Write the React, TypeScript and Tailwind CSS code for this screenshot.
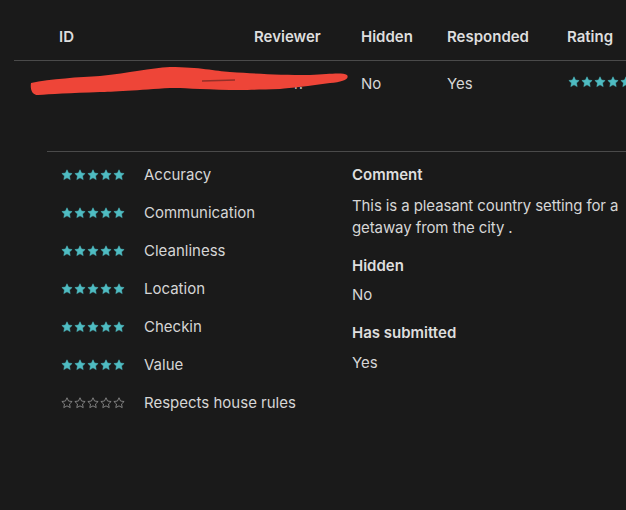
import React from "react";

const Star = ({ filled }: { filled: boolean }) => (
  <svg width="12" height="12" viewBox="0 0 24 24" className="shrink-0">
    <path
      d="M12 1.5l3.1 6.6 7.2.9-5.3 5 1.4 7.2L12 17.7l-6.4 3.5 1.4-7.2-5.3-5 7.2-.9z"
      fill={filled ? "#4fbcc2" : "none"}
      stroke={filled ? "#4fbcc2" : "#8a8a8a"}
      strokeWidth={filled ? 1 : 1.8}
      strokeLinejoin="round"
    />
  </svg>
);

const Stars = ({ filled, count = 5 }: { filled: boolean; count?: number }) => (
  <div className="flex items-center gap-[1px]">
    {Array.from({ length: count }).map((_, i) => (
      <Star key={i} filled={filled} />
    ))}
  </div>
);

const ratings: [string, boolean][] = [
  ["Accuracy", true],
  ["Communication", true],
  ["Cleanliness", true],
  ["Location", true],
  ["Checkin", true],
  ["Value", true],
  ["Respects house rules", false],
];

export default function App() {
  return (
    <div
      className="w-[626px] h-[510px] overflow-hidden bg-[#1a1a1a] text-[15px] text-[#d6d6d6]"
      style={{ fontFamily: "Inter, 'Noto Sans', sans-serif" }}
    >
      {/* header */}
      <div className="ml-[14px] flex h-[61px] items-start border-b border-[#4a4a4a] pt-[26px] font-semibold leading-[22px] text-[#dedede]">
        <div className="w-[240px] pl-[45px]">ID</div>
        <div className="w-[107px]">Reviewer</div>
        <div className="w-[86px]">Hidden</div>
        <div className="w-[120px]">Responded</div>
        <div className="flex-1 whitespace-nowrap">Rating</div>
      </div>

      {/* data row */}
      <div className="relative ml-[14px] flex h-[46px] items-center">
        <div className="w-[240px] pl-[60px] text-[#bdbdbd]">T</div>
        <div className="w-[107px] pl-[40px] text-[#bdbdbd]">r.</div>
        <div className="w-[86px]">No</div>
        <div className="w-[120px]">Yes</div>
        <div className="flex-1 overflow-hidden pl-[1px] pb-[5px]">
          <Stars filled count={5} />
        </div>
        <svg
          className="absolute left-[16px] top-[4px]"
          width="322"
          height="34"
          viewBox="0 0 322 34"
        >
          <path
            d="M1 18 C 20 14, 50 12, 70 11 C 100 8, 120 3, 140 2 C 170 2, 185 6, 200 7 C 230 9, 250 10, 280 10 C 300 9, 312 7, 317 10 C 320 14, 312 17, 300 18 C 280 21, 260 23, 250 24 C 220 25, 210 25, 200 25 C 170 24, 150 23, 140 23 C 110 25, 80 27, 70 27 C 40 28, 20 29, 8 30 C 2 30, 0 24, 1 18 Z"
            fill="#ee4538"
          />
          <path
            d="M172 16 L 205 15"
            stroke="#3a1a18"
            strokeWidth="1.5"
            fill="none"
            opacity="0.5"
          />
        </svg>
      </div>

      {/* expanded section */}
      <div className="ml-[47px] mt-[44px] flex border-t border-[#4a4a4a]">
        <div className="w-[305px] pl-[14px] pt-[4px]">
          {ratings.map(([label, filled]) => (
            <div key={label} className="flex h-[38px] items-center">
              <div className="w-[83px]">
                <Stars filled={filled} />
              </div>
              <span className="leading-[22px]">{label}</span>
            </div>
          ))}
        </div>
        <div className="flex-1 pt-[12px] leading-[22px]">
          <div className="font-semibold text-[#dedede]">Comment</div>
          <div className="mt-[9px] w-[274px] tracking-[-0.1px]">
            This is a pleasant country setting for a getaway from the city .
          </div>
          <div className="mt-[16px] font-semibold text-[#dedede]">Hidden</div>
          <div className="mt-[7px]">No</div>
          <div className="mt-[16px] font-semibold text-[#dedede]">Has submitted</div>
          <div className="mt-[8px]">Yes</div>
        </div>
      </div>
    </div>
  );
}
